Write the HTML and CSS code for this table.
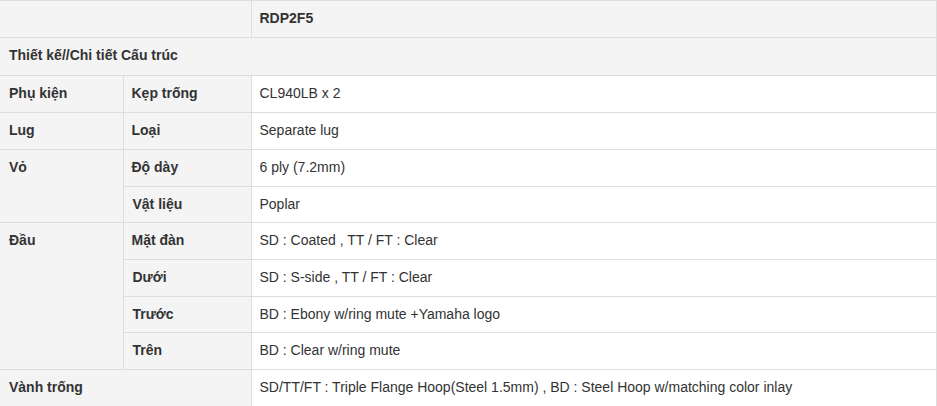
FILE: index.html
```html
<!DOCTYPE html>
<html lang="vi">
<head>
<meta charset="utf-8">
<link rel="stylesheet" href="styles.css">
</head>
<body>
<table class="spec">
  <colgroup>
    <col class="c1">
    <col class="c2">
    <col class="c3">
  </colgroup>
  <tbody>
    <tr class="head">
      <td colspan="2"></td>
      <td class="model">RDP2F5</td>
    </tr>
    <tr class="section">
      <td colspan="3">Thiết kế//Chi tiết Cấu trúc</td>
    </tr>
    <tr>
      <th>Phụ kiện</th>
      <th>Kẹp trống</th>
      <td>CL940LB x 2</td>
    </tr>
    <tr>
      <th>Lug</th>
      <th>Loại</th>
      <td>Separate lug</td>
    </tr>
    <tr class="tight">
      <th rowspan="2">Vỏ</th>
      <th>Độ dày</th>
      <td>6 ply (7.2mm)</td>
    </tr>
    <tr class="tight">
      <th>Vật liệu</th>
      <td>Poplar</td>
    </tr>
    <tr class="tight">
      <th rowspan="4">Đầu</th>
      <th>Mặt đàn</th>
      <td>SD : Coated , TT / FT : Clear</td>
    </tr>
    <tr class="tight">
      <th>Dưới</th>
      <td>SD : S-side , TT / FT : Clear</td>
    </tr>
    <tr class="tight">
      <th>Trước</th>
      <td>BD : Ebony w/ring mute +Yamaha logo</td>
    </tr>
    <tr class="tight">
      <th>Trên</th>
      <td>BD : Clear w/ring mute</td>
    </tr>
    <tr class="tight">
      <th colspan="2">Vành trống</th>
      <td>SD/TT/FT : Triple Flange Hoop(Steel 1.5mm) , BD : Steel Hoop w/matching color inlay</td>
    </tr>
  </tbody>
</table>
</body>
</html>
```
FILE: styles.css
```css
html, body {
  margin: 0;
  padding: 0;
  background: #fff;
}
body {
  font-family: "Liberation Sans", Arial, sans-serif;
  font-size: 14px;
  line-height: 20px;
  color: #333;
}
.spec {
  width: 937px;
  border-collapse: collapse;
  table-layout: fixed;
}
.c1 { width: 123px; }
.c2 { width: 128px; }
.spec th,
.spec td {
  border: 1px solid #ddd;
  padding: 7px 8px 9px;
  text-align: left;
  vertical-align: top;
}
.spec tr > :first-child {
  border-left: none;
  padding-left: 9px;
}
.spec .tight th,
.spec .tight td {
  line-height: 19.67px;
  padding-top: 8px;
  padding-bottom: 8px;
}
.spec .section td {
  padding-bottom: 10px;
}
.spec th {
  background: #f4f4f4;
  font-weight: bold;
}
.spec td {
  background: #fff;
  font-weight: normal;
}
.spec .head td,
.spec .section td {
  background: #f4f4f4;
  font-weight: bold;
}
```
